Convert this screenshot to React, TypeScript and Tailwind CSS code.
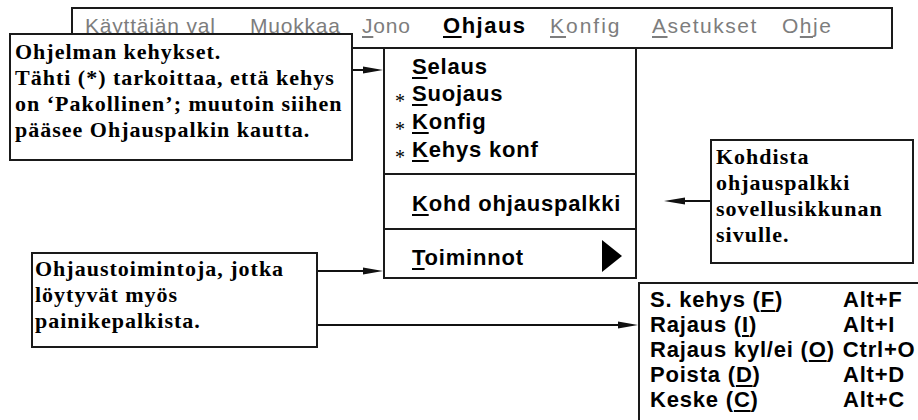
import React from "react";

const Mn = ({ children }: { children: React.ReactNode }) => (
  <span className="underline decoration-2 underline-offset-[3px]">{children}</span>
);

const Star = () => (
  <span className="inline-block translate-y-[7px] font-['Liberation_Serif',serif] font-normal text-[20px] tracking-normal">
    *
  </span>
);

function MenuBar() {
  return (
    <div className="ml-[71px] mt-[7px] w-[822px] h-[42px] border-2 border-[#1a1a1a] flex items-start pt-[5px] pl-[12px] font-['Liberation_Sans',Arial,sans-serif] text-[21px] leading-[24px] tracking-[0.8px] whitespace-nowrap">
      <span className="w-[165px] shrink-0 text-[#7d7d7d]">
        <Mn>K</Mn>äyttäjän val
      </span>
      <span className="w-[112px] shrink-0 text-[#7d7d7d]">
        <Mn>M</Mn>uokkaa
      </span>
      <span className="w-[81px] shrink-0 text-[#7d7d7d]">
        <Mn>J</Mn>ono
      </span>
      <span className="w-[107px] shrink-0 font-bold text-black text-[22px] tracking-[1.5px]">
        <Mn>O</Mn>hjaus
      </span>
      <span className="w-[102px] shrink-0 text-[#7d7d7d] tracking-[2px]">
        <Mn>K</Mn>onfig
      </span>
      <span className="w-[130px] shrink-0 text-[#7d7d7d] tracking-[1.5px]">
        <Mn>A</Mn>setukset
      </span>
      <span className="shrink-0 text-[#7d7d7d] tracking-[1.5px]">
        O<Mn>h</Mn>je
      </span>
    </div>
  );
}

function DropRow({ star, first, rest }: { star?: boolean; first: string; rest: string }) {
  return (
    <div className="flex leading-[27px]">
      <span className="w-[27px] shrink-0 pl-[10px]">{star ? <Star /> : null}</span>
      <span>
        <Mn>{first}</Mn>
        {rest}
      </span>
    </div>
  );
}

function Dropdown() {
  return (
    <div className="ml-[383px] w-[254px] h-[230px] border-2 border-t-0 border-[#1a1a1a] flex flex-col font-['Liberation_Sans',Arial,sans-serif] text-[22px] font-bold tracking-[0.8px] whitespace-nowrap">
      <div className="h-[124px] pt-[4px]">
        <DropRow first="S" rest="elaus" />
        <DropRow star first="S" rest="uojaus" />
        <DropRow star first="K" rest="onfig" />
        <DropRow star first="K" rest="ehys konf" />
      </div>
      <div className="h-[2px] bg-[#1a1a1a]" />
      <div className="h-[53px] pt-[15px]">
        <DropRow first="K" rest="ohd ohjauspalkki" />
      </div>
      <div className="h-[2px] bg-[#1a1a1a]" />
      <div className="flex-1 pt-[14px] flex items-start justify-between pr-[13px]">
        <DropRow first="T" rest="oiminnot" />
        <svg width="20" height="32" viewBox="0 0 20 32" className="mt-[-4px]">
          <polygon points="0,0 20,16 0,32" fill="#000" />
        </svg>
      </div>
    </div>
  );
}

const subItems = [
  { a: "S. kehys (", m: "F", b: ")", sc: "Alt+F", tab: true },
  { a: "Rajaus (", m: "I", b: ")", sc: "Alt+I", tab: true },
  { a: "Rajaus kyl/ei (", m: "O", b: ")", sc: "Ctrl+O", tab: false },
  { a: "Poista (", m: "D", b: ")", sc: "Alt+D", tab: true },
  { a: "Keske (", m: "C", b: ")", sc: "Alt+C", tab: true },
];

function SubMenu() {
  return (
    <div className="ml-[638px] mt-[3px] w-[320px] h-[200px] border-l-2 border-t-2 border-[#1a1a1a] pt-[3px] pl-[10px] font-['Liberation_Sans',Arial,sans-serif] text-[22px] leading-[25px] font-bold tracking-[0.8px] whitespace-nowrap">
      {subItems.map((it) => (
        <div key={it.sc} className="flex">
          <span className={it.tab ? "w-[193px] shrink-0" : "shrink-0 mr-[8px]"}>
            {it.a}
            <Mn>{it.m}</Mn>
            {it.b}
          </span>
          <span>{it.sc}</span>
        </div>
      ))}
    </div>
  );
}

const calloutText =
  "font-['Liberation_Serif','Times_New_Roman',serif] text-[22px] leading-[26px] font-bold tracking-[1px] whitespace-nowrap text-black";

export default function App() {
  return (
    <div className="relative w-[918px] h-[420px] overflow-hidden bg-white text-black">
      <MenuBar />
      <Dropdown />
      <SubMenu />

      {/* Callout: Ohjelman kehykset */}
      <div
        className={`absolute left-[9px] top-[33px] w-[344px] h-[128px] border-2 border-[#1a1a1a] bg-white pl-[4px] pt-[4px] ${calloutText}`}
      >
        <div>Ohjelman kehykset.</div>
        <div>Tähti (*) tarkoittaa, että kehys</div>
        <div>on ‘Pakollinen’; muutoin siihen</div>
        <div>pääsee Ohjauspalkin kautta.</div>
      </div>

      {/* Callout: Kohdista */}
      <div
        className={`absolute left-[710px] top-[139px] w-[204px] h-[125px] border-2 border-[#1a1a1a] bg-white pl-[4px] pt-[3px] ${calloutText}`}
      >
        <div>Kohdista</div>
        <div>ohjauspalkki</div>
        <div>sovellusikkunan</div>
        <div>sivulle.</div>
      </div>

      {/* Callout: Ohjaustoimintoja */}
      <div
        className={`absolute left-[31px] top-[252px] w-[287px] h-[96px] border-2 border-[#1a1a1a] bg-white pl-[2px] pt-[2px] ${calloutText}`}
      >
        <div>Ohjaustoimintoja, jotka</div>
        <div>löytyvät myös</div>
        <div>painikepalkista.</div>
      </div>

      {/* Arrows */}
      <svg
        className="absolute left-0 top-0 pointer-events-none"
        width="918"
        height="420"
        viewBox="0 0 918 420"
      >
        <g stroke="#111" strokeWidth="2" fill="none">
          <line x1="353" y1="70" x2="365" y2="70" />
          <line x1="710" y1="201" x2="683" y2="201" />
          <line x1="318" y1="271" x2="365" y2="271" />
          <line x1="318" y1="325" x2="620" y2="325" />
        </g>
        <g fill="#111">
          <polygon points="363,66.5 383,70 363,73.5" />
          <polygon points="685,197.5 664,201 685,204.5" />
          <polygon points="363,267.5 383,271 363,274.5" />
          <polygon points="618,321.5 638,325 618,328.5" />
        </g>
      </svg>
    </div>
  );
}
